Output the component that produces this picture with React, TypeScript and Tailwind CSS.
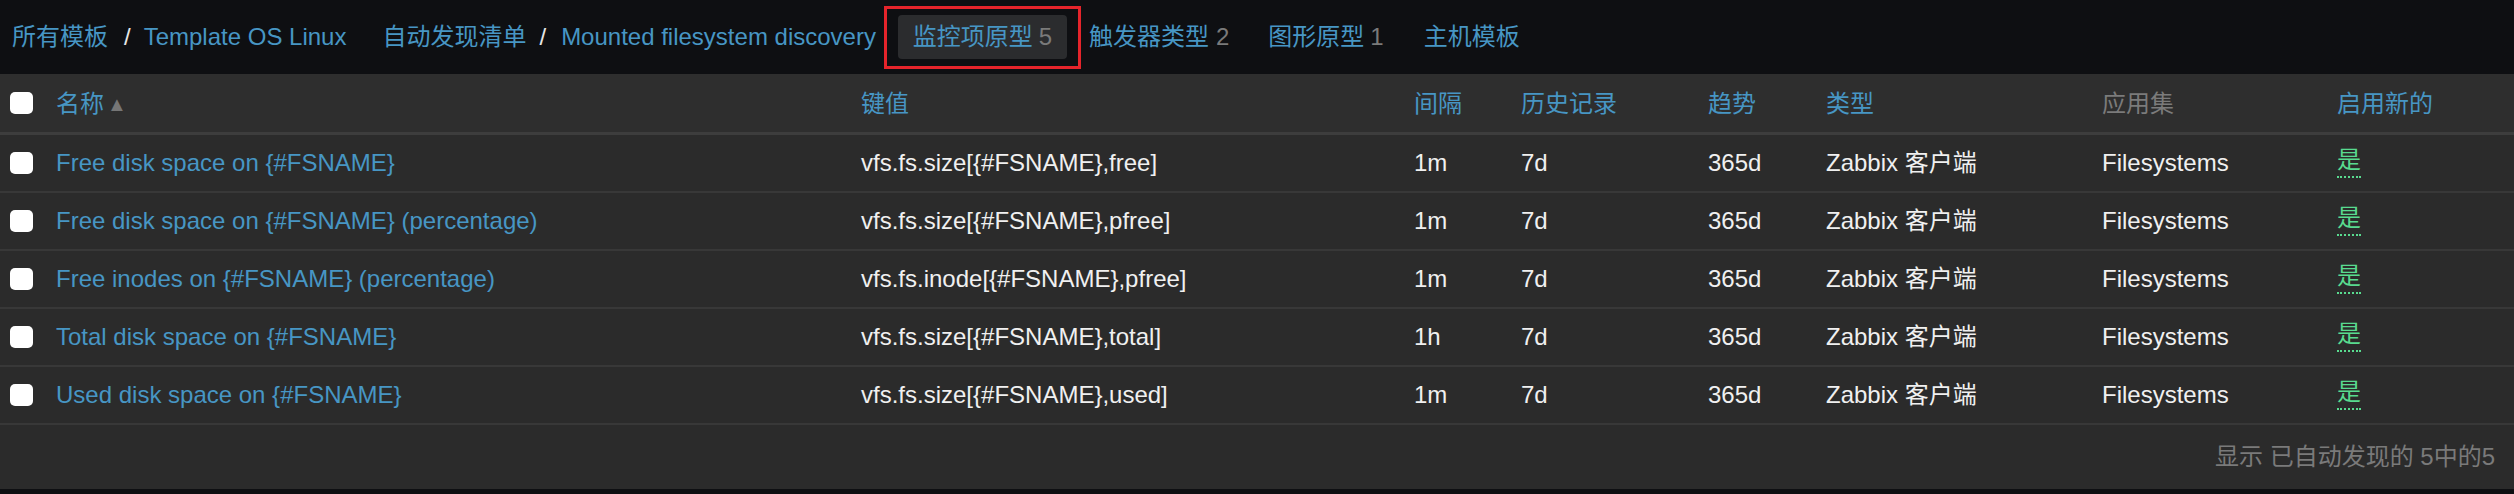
import React from "react";

const rows = [
  { name: "Free disk space on {#FSNAME}", key: "vfs.fs.size[{#FSNAME},free]", interval: "1m" },
  { name: "Free disk space on {#FSNAME} (percentage)", key: "vfs.fs.size[{#FSNAME},pfree]", interval: "1m" },
  { name: "Free inodes on {#FSNAME} (percentage)", key: "vfs.fs.inode[{#FSNAME},pfree]", interval: "1m" },
  { name: "Total disk space on {#FSNAME}", key: "vfs.fs.size[{#FSNAME},total]", interval: "1h" },
  { name: "Used disk space on {#FSNAME}", key: "vfs.fs.size[{#FSNAME},used]", interval: "1m" },
];

const gridCols = "grid grid-cols-[56px_805px_553px_107px_187px_118px_276px_235px_1fr] items-center";

function Checkbox() {
  return <div className="ml-[10px] w-[23px] h-[22px] rounded-[5px] bg-white" />;
}

export default function App() {
  return (
    <div
      className="w-[2514px] h-[494px] bg-[#0e0f12] text-[24px] leading-none flex flex-col"
      style={{ fontFamily: '"Liberation Sans", "Noto Sans CJK SC", sans-serif' }}
    >
      {/* top nav */}
      <div className="h-[74px] flex items-center text-[#4796c4]">
        <span className="ml-[12px]">所有模板</span>
        <span className="ml-[16px] text-[#e6e6e6]">/</span>
        <span className="ml-[13px]">Template OS Linux</span>
        <span className="ml-[36px]">自动发现清单</span>
        <span className="ml-[13px] text-[#e6e6e6]">/</span>
        <span className="ml-[15px]">Mounted filesystem discovery</span>
        <div className="ml-[8px] w-[197px] h-[63px] border-[3px] border-[#e5242b] flex items-center justify-center">
          <div className="w-[169px] h-[44px] rounded-[4px] bg-[#2b2c2e] flex items-center justify-center">
            <span>监控项原型</span>
            <span className="ml-[6px] text-[#7a7a7a]">5</span>
          </div>
        </div>
        <span className="ml-[8px]">触发器类型</span>
        <span className="ml-[7px] text-[#7a7a7a]">2</span>
        <span className="ml-[39px]">图形原型</span>
        <span className="ml-[6px] text-[#7a7a7a]">1</span>
        <span className="ml-[40px]">主机模板</span>
      </div>

      {/* table */}
      <div className="bg-[#2b2b2b] flex flex-col">
        <div className={`${gridCols} h-[61px] bg-[#2e2e2e] border-b-[3px] border-[#3d3d3d] text-[#4796c4]`}>
          <Checkbox />
          <div className="flex items-center pt-[2px]">
            <span>名称</span>
            <span className="ml-[3px] text-[20px] text-[#767676]">▲</span>
          </div>
          <div className="pt-[2px]">键值</div>
          <div className="pt-[2px]">间隔</div>
          <div className="pt-[2px]">历史记录</div>
          <div className="pt-[2px]">趋势</div>
          <div className="pt-[2px]">类型</div>
          <div className="pt-[2px] text-[#7b7b7b]">应用集</div>
          <div className="pt-[2px]">启用新的</div>
        </div>
        {rows.map((r) => (
          <div key={r.name} className={`${gridCols} h-[58px] border-b-2 border-[#383838] text-[#f0f0f0]`}>
            <Checkbox />
            <div className="text-[#4796c4]">{r.name}</div>
            <div>{r.key}</div>
            <div>{r.interval}</div>
            <div>7d</div>
            <div>365d</div>
            <div>Zabbix 客户端</div>
            <div>Filesystems</div>
            <div>
              <span className="inline-block text-[#59db8f] pb-[4px] border-b-2 border-dotted border-[#59db8f]">是</span>
            </div>
          </div>
        ))}
        <div className="h-[64px] flex items-center justify-end pr-[19px] text-[#7a7a7a]">
          显示 已自动发现的 5中的5
        </div>
      </div>
    </div>
  );
}
